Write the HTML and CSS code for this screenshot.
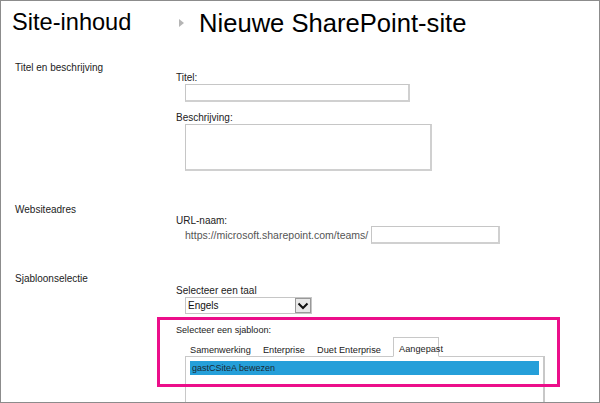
FILE: index.html
```html
<!DOCTYPE html>
<html lang="nl">
<head>
    <meta charset="UTF-8">
    <title>Nieuwe SharePoint-site</title>
    <link rel="stylesheet" href="styles.css">
</head>
<body>
    <div id="page">
        <div class="header">
            <div class="crumb">Site-inhoud</div>
            <svg class="arrow" width="5" height="8" viewBox="0 0 5 8"><path d="M0 0L5 4L0 8Z" fill="#b5b5b5"/></svg>
            <h1>Nieuwe SharePoint-site</h1>
        </div>

        <div class="section section-title">
            <div class="section-name">Titel en beschrijving</div>
            <div class="fields">
                <label>Titel:</label>
                <input class="text title-input" type="text">
                <label class="second">Beschrijving:</label>
                <textarea class="text desc-input"></textarea>
            </div>
        </div>

        <div class="section section-url">
            <div class="section-name">Websiteadres</div>
            <div class="fields">
                <label>URL-naam:</label>
                <div class="url-row">
                    <span class="url-text">https://microsoft.sharepoint.com/teams/</span>
                    <input class="text url-input" type="text">
                </div>
            </div>
        </div>

        <div class="section section-template">
            <div class="section-name">Sjabloonselectie</div>
            <div class="fields">
                <label>Selecteer een taal</label>
                <div class="select">
                    <span class="select-value">Engels</span>
                    <span class="select-btn">
                        <svg width="12" height="8" viewBox="0 0 12 8"><path d="M1.5 1.5L6 6L10.5 1.5" fill="none" stroke="#111" stroke-width="2"/></svg>
                    </span>
                </div>
                <label class="template-label">Selecteer een sjabloon:</label>
                <div class="tabs">
                    <span class="tab">Samenwerking</span>
                    <span class="tab">Enterprise</span>
                    <span class="tab">Duet Enterprise</span>
                    <span class="tab active">Aangepast</span>
                </div>
                <div class="listbox">
                    <div class="list-item">gastCSiteA bewezen</div>
                </div>
            </div>
        </div>

        <div class="highlight"></div>
    </div>
</body>
</html>
```

FILE: styles.css
```css
html, body {
    margin: 0;
    height: 100%;
}

body {
    font-family: "Liberation Sans", Arial, sans-serif;
    font-size: 10px;
    color: #222;
    background-color: #fff;
}

#page {
    position: relative;
    box-sizing: border-box;
    width: 600px;
    height: 403px;
    border: 1px solid #8c8c8c;
    overflow: hidden;
}

.header {
    display: flex;
    align-items: center;
    height: 44px;
    padding-left: 11px;
}

.crumb {
    width: 167px;
    margin-bottom: 2px;
    font-size: 23.6px;
    color: #000;
}

.arrow {
    margin-right: 15px;
}

h1 {
    margin: 0;
    font-size: 25.6px;
    font-weight: normal;
    color: #000;
}

.section {
    display: grid;
    grid-template-columns: 161px 1fr;
    padding-left: 14px;
}

.section-title {
    margin-top: 16px;
    height: 142px;
}

.section-url {
    height: 69px;
}

.section-name {
    line-height: 14px;
}

.fields {
    display: flex;
    flex-direction: column;
    align-items: flex-start;
}

label {
    line-height: 13px;
}

.section-title .fields {
    padding-top: 10px;
}

.section-url .fields {
    padding-top: 11px;
}

.section-template .fields {
    padding-top: 12px;
}

.text {
    box-sizing: border-box;
    display: block;
    margin: 0;
    padding: 0;
    border: 1px solid #c6c6c6;
    border-bottom-width: 2px;
    border-right-width: 2px;
    border-color: #c6c6c6 #d0d0d0 #d0d0d0 #c6c6c6;
    background-color: #fff;
    resize: none;
    outline: none;
}

.title-input {
    width: 225px;
    height: 18px;
    margin-left: 9px;
}

.second {
    margin-top: 9px;
}

.desc-input {
    width: 247px;
    height: 47px;
    margin-left: 9px;
}

.url-row {
    display: flex;
    align-items: center;
    margin-top: -1px;
    margin-left: 9px;
}

.url-text {
    width: 186px;
    font-size: 10.5px;
    color: #555;
    white-space: nowrap;
}

.url-input {
    width: 129px;
    height: 18px;
}

.select {
    display: flex;
    box-sizing: border-box;
    width: 127px;
    height: 17px;
    margin-left: 9px;
    border: 1px solid #c6c6c6;
}

.select-value {
    flex: 1;
    padding-left: 2px;
    line-height: 16px;
    color: #111;
}

.select-btn {
    display: flex;
    align-items: center;
    justify-content: center;
    box-sizing: border-box;
    width: 16px;
    border: 1px solid #999;
    background-color: #e8e8e8;
}

.template-label {
    margin-top: 10px;
    font-size: 9.1px;
}

.tabs {
    display: flex;
    align-items: flex-end;
    margin-left: 14px;
    height: 19px;
    font-size: 9.2px;
}

.tab {
    margin-bottom: -1px;
    padding-right: 12.2px;
    line-height: 13px;
    color: #222;
    white-space: nowrap;
}

.tab.active {
    position: relative;
    z-index: 1;
    box-sizing: border-box;
    width: 46px;
    height: 20px;
    padding: 5px 0 0 5px;
    border: 1px solid #c8c8c8;
    border-bottom-color: #fff;
    background-color: #fff;
}

.listbox {
    box-sizing: border-box;
    width: 360px;
    height: 60px;
    margin-left: 9px;
    padding: 4px 4px;
    border: 1px solid #c8c8c8;
    border-width: 1px 2px 0 1px;
}

.list-item {
    height: 14px;
    padding-left: 2px;
    font-size: 9px;
    line-height: 14px;
    color: #1b2a33;
    background-color: #259fd9;
}

/* callout drawn over the screenshot */
.highlight {
    position: absolute;
    left: 156px;
    top: 316px;
    width: 397px;
    height: 64px;
    border: 3px solid #ec0e8a;
}
```
